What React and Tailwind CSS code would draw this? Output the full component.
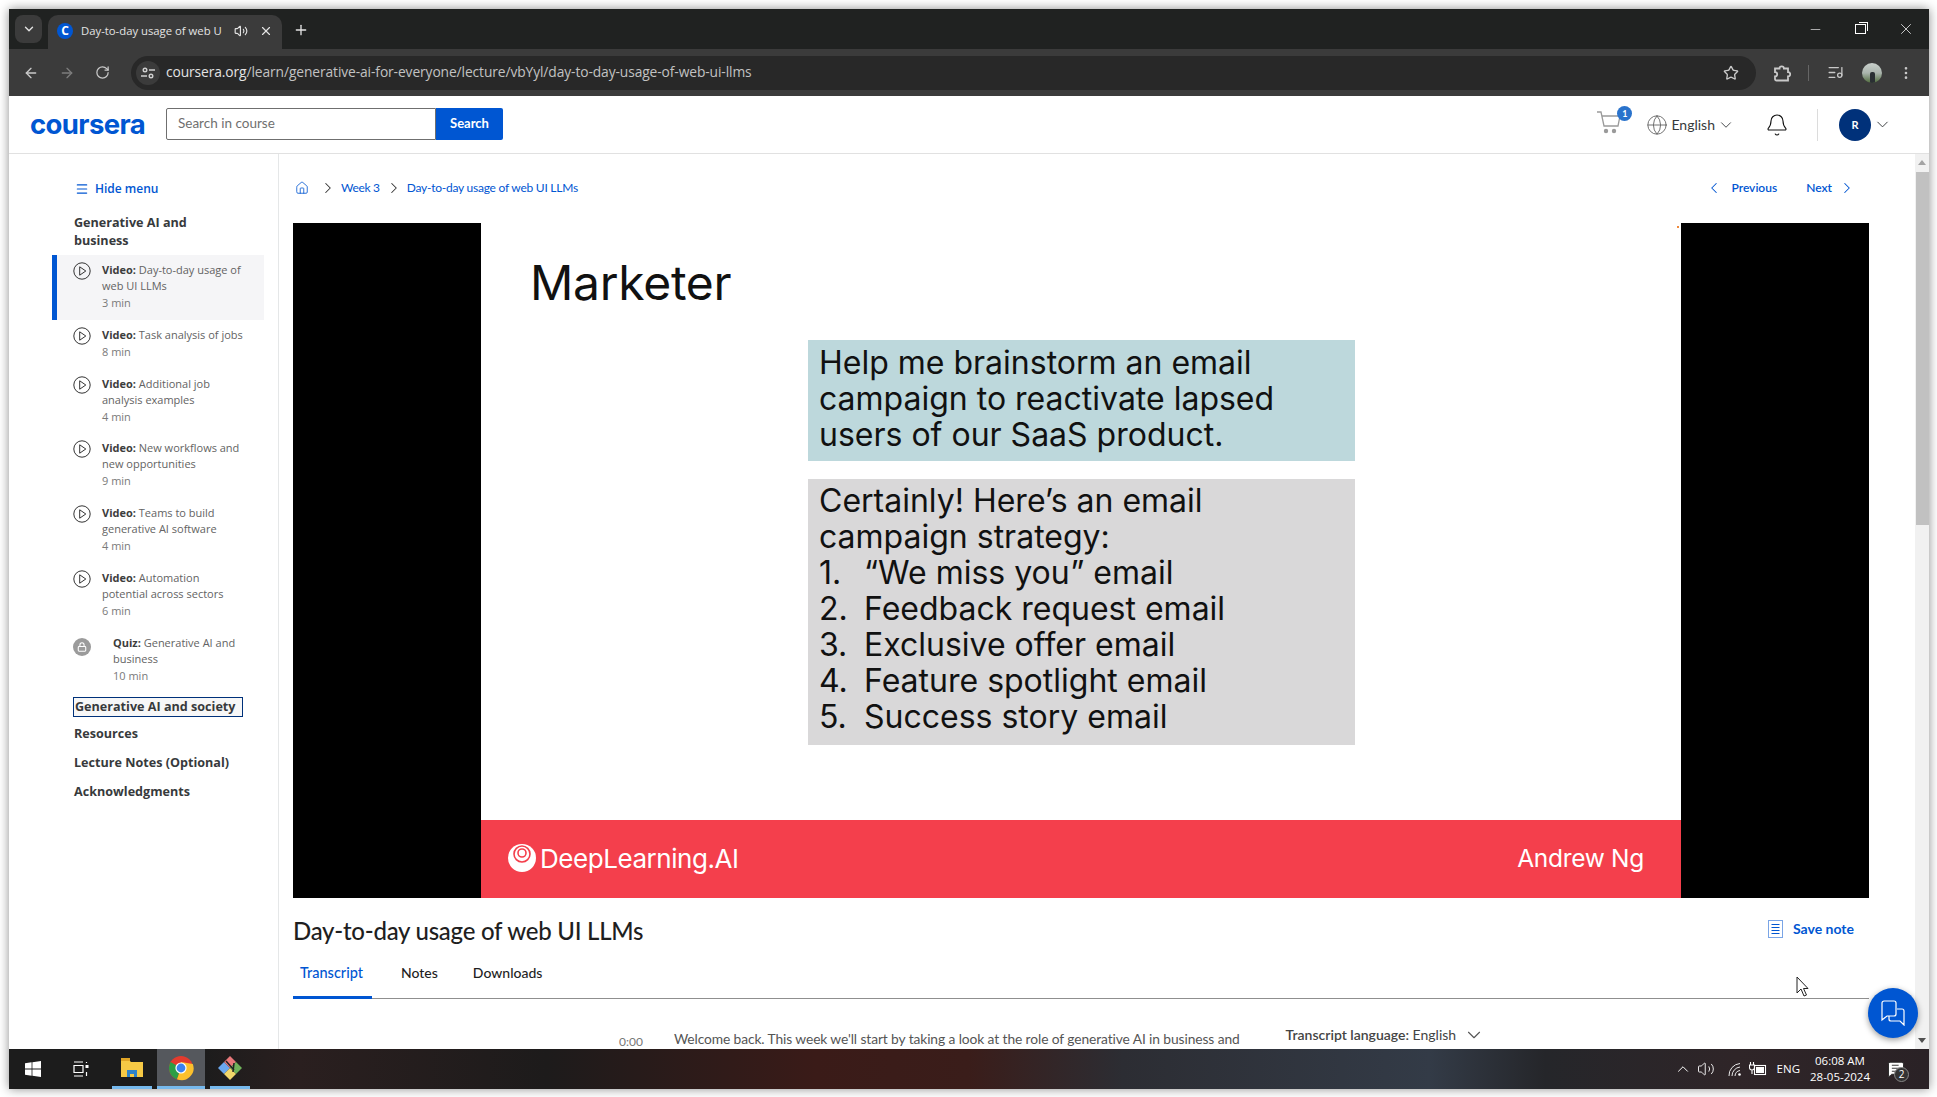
import React from 'react';
import { ChevronDown, ChevronLeft, ChevronRight, X, Plus, ArrowLeft, ArrowRight, RotateCw, Star, Volume2, Minus, Menu, Home, Bell, Globe, ChevronUp, EllipsisVertical, ListMusic, Lock, MessageSquareText } from 'lucide-react';

const lessons = [
  { kind: 'Video:', lines: ['Day-to-day usage of', 'web UI LLMs'], time: '3 min', active: true },
  { kind: 'Video:', lines: ['Task analysis of jobs'], time: '8 min' },
  { kind: 'Video:', lines: ['Additional job', 'analysis examples'], time: '4 min', tight: true },
  { kind: 'Video:', lines: ['New workflows and', 'new opportunities'], time: '9 min' },
  { kind: 'Video:', lines: ['Teams to build', 'generative AI software'], time: '4 min' },
  { kind: 'Video:', lines: ['Automation', 'potential across sectors'], time: '6 min' },
];

const steps = ['“We miss you” email', 'Feedback request email', 'Exclusive offer email', 'Feature spotlight email', 'Success story email'];

function PlayIcon() {
  return (
    <svg width="18" height="18" viewBox="0 0 18 18" fill="none" stroke="#333" strokeWidth="1" className="shrink-0">
      <circle cx="9" cy="9" r="8.2" />
      <path d="M6.7 4.8 L12.8 9 L6.7 13.2 Z" />
    </svg>
  );
}

function Lesson({ item }) {
  return (
    <div className={`flex pt-[7px] pl-[21px] ${item.tight ? 'pb-[7px]' : 'pb-[8px]'} ${item.active ? 'bg-[#f5f5f7] border-l-[5px] border-[#0056d2] !pl-[16px]' : ''}`}>
      <PlayIcon />
      <div className="ml-[11px] text-[11px] leading-[16px] text-[#636363]">
        {item.lines.map((line, i) => (
          <div key={line}>
            {i === 0 && <span className="font-bold text-[#3d3d3d]">{item.kind} </span>}
            {line}
          </div>
        ))}
        <div className="leading-[18px] text-[#7a7a7a]">{item.time}</div>
      </div>
    </div>
  );
}

function Sidebar() {
  return (
    <div className="w-[270px] shrink-0 border-r border-[#e5e7e8] font-['Open_Sans',sans-serif]">
      <div className="flex items-center pl-[66px] pt-[27px] text-[#0056d2]">
        <Menu size={14} strokeWidth={2} />
        <span className="ml-[6px] text-[12px] leading-[16px] font-semibold">Hide menu</span>
      </div>
      <div className="ml-[65px] mt-[17px] w-[140px] text-[12.6px] leading-[18px] font-bold text-[#373a3c]">Generative AI and business</div>
      <div className="ml-[43px] mt-[5px] w-[212px]">
        {lessons.map(item => <Lesson key={item.lines[0]} item={item} />)}
        <div className="flex pt-[7px] pb-[8px] pl-[21px]">
          <div className="w-[18px] h-[18px] mt-[3px] rounded-full bg-[#9b9b9b] flex items-center justify-center shrink-0">
            <Lock size={10} color="#fff" strokeWidth={2.5} />
          </div>
          <div className="ml-[22px] text-[11px] leading-[16px] text-[#636363]">
            <div><span className="font-bold text-[#3d3d3d]">Quiz: </span>Generative AI and</div>
            <div>business</div>
            <div className="leading-[18px] text-[#7a7a7a]">10 min</div>
          </div>
        </div>
      </div>
      <div className="ml-[64px] mt-[4px] text-[12.6px] font-bold text-[#373a3c]">
        <div className="w-[170px] h-[20px] border border-[#00317a] bg-[#f7f7f7] pl-[1px] leading-[18px] whitespace-nowrap">Generative AI and society</div>
        <div className="pl-[1px] mt-[8px] leading-[18px]">Resources</div>
        <div className="pl-[1px] mt-[11px] leading-[18px]">Lecture Notes (Optional)</div>
        <div className="pl-[1px] mt-[11px] leading-[18px]">Acknowledgments</div>
      </div>
    </div>
  );
}

function Slide() {
  return (
    <div className="relative w-[1200px] h-full bg-white flex flex-col font-['Inter',sans-serif] text-[#111]">
      <div className="flex-1 overflow-hidden">
        <div className="ml-[49px] mt-[28px] text-[48px] leading-[64px] tracking-[-0.3px]">Marketer</div>
        <div className="ml-[327px] mt-[25px] w-[547px] text-[32px] leading-[36px]">
          <div className="h-[121px] bg-[#bdd8dc] px-[11px] pt-[5px]">
            <div>Help me brainstorm an email</div>
            <div>campaign to reactivate lapsed</div>
            <div>users of our SaaS product.</div>
          </div>
          <div className="h-[266px] mt-[18px] bg-[#d9d8d9] px-[11px] pt-[4px]">
            <div>Certainly! Here’s an email</div>
            <div>campaign strategy:</div>
            {steps.map((step, i) => (
              <div key={step} className="flex">
                <span className="w-[45px]">{i + 1}.</span>
                <span>{step}</span>
              </div>
            ))}
          </div>
        </div>
      </div>
      <div className="h-[78px] bg-[#f43f4c] flex items-center justify-between pl-[26px] pr-[37px] pb-[2px] text-white">
        <div className="flex items-center">
          <svg width="30" height="30" viewBox="0 0 30 30">
            <circle cx="15" cy="15" r="14" fill="#fff" />
            <circle cx="15" cy="11" r="8" fill="none" stroke="#f43f4c" strokeWidth="1.6" />
            <circle cx="15" cy="10" r="4" fill="none" stroke="#f43f4c" strokeWidth="1.6" />
          </svg>
          <span className="ml-[3px] text-[26px] tracking-[-0.45px]">DeepLearning.AI</span>
        </div>
        <span className="text-[24.5px] tracking-[-0.3px]">Andrew Ng</span>
      </div>
      <div className="absolute right-[2px] top-[3px] w-[2px] h-[2px] bg-[#f08a3c]" />
    </div>
  );
}

function Main() {
  return (
    <div className="flex-1 min-w-0 h-full overflow-hidden pl-[14px] font-['Lato',sans-serif]">
      <div className="w-[1576px]">
        <div className="h-[69px] pt-[26px] flex items-start text-[12px] leading-[16px] text-[#0056d2]">
          <Home size={14} strokeWidth={1.4} className="ml-[2px] mt-[1px]" />
          <ChevronRight size={18} strokeWidth={1.4} color="#333" className="ml-[10px] mt-[-1px]" />
          <span className="ml-[4px] tracking-[-0.3px]">Week 3</span>
          <ChevronRight size={18} strokeWidth={1.4} color="#333" className="ml-[5px] mt-[-1px]" />
          <span className="ml-[4px] tracking-[-0.24px]">Day-to-day usage of web UI LLMs</span>
          <div className="ml-auto mr-[13px] flex items-start font-semibold">
            <ChevronLeft size={18} strokeWidth={1.4} className="mt-[-1px]" />
            <span className="ml-[8px]">Previous</span>
            <span className="ml-[29px]">Next</span>
            <ChevronRight size={18} strokeWidth={1.4} className="ml-[6px] mt-[-1px]" />
          </div>
        </div>
        <div className="h-[675px] bg-black flex justify-center">
          <Slide />
        </div>
        <div className="h-[65px] flex items-center justify-between">
          <div className="text-[24px] leading-[30px] font-medium text-[#1f1f1f] tracking-[-0.25px]">Day-to-day usage of web UI LLMs</div>
          <div className="flex items-center mr-[15px] mt-[-4px] text-[#0056d2] text-[14px] font-bold">
            <svg width="15" height="18" viewBox="0 0 15 18" fill="none" stroke="#0056d2">
              <rect x="0.5" y="0.5" width="14" height="17" stroke="#7aa5e6" />
              <path d="M3.5 4.5h8M3.5 7.5h8M3.5 10.5h8M3.5 13.5h8" />
            </svg>
            <span className="ml-[10px]">Save note</span>
          </div>
        </div>
        <div className="h-[36px] border-b-[1.5px] border-[#8f8f8f] flex pt-[1px] text-[14px] leading-[18px] font-medium text-[#1f1f1f]">
          <div className="w-[79px] h-[35px] pl-[7px] text-[14.5px] text-[#0056d2] border-b-[3px] border-[#0056d2]">Transcript</div>
          <div className="ml-[29px]">Notes</div>
          <div className="ml-[35px]">Downloads</div>
        </div>
        <div className="flex items-start mt-[31px] text-[13.8px] leading-[18px] text-[#555]">
          <span className="ml-[326px] mt-[3px] text-[12px] text-[#777]">0:00</span>
          <span className="ml-[31px] tracking-[-0.1px] whitespace-nowrap">Welcome back. This week we'll start by taking a look at the role of generative AI in business and</span>
          <span className="ml-[46px] mt-[-4px] whitespace-nowrap text-[14px] text-[#444]"><span className="font-semibold">Transcript language:</span> English</span>
          <ChevronDown size={22} strokeWidth={1.2} className="ml-[7px] mt-[-6px]" />
        </div>
      </div>
    </div>
  );
}

function Scrollbar() {
  return (
    <div className="w-[14px] h-full shrink-0 bg-[#f1f1f1] flex flex-col items-center justify-between pt-[6px] pb-[6px]">
      <div className="w-full flex flex-col items-center">
        <div className="w-0 h-0 border-x-[4px] border-x-transparent border-b-[5px] border-b-[#a3a3a3]" />
        <div className="w-[13px] h-[353px] mt-[7px] bg-[#c1c1c1]" />
      </div>
      <div className="w-0 h-0 border-x-[4px] border-x-transparent border-t-[5px] border-t-[#505050]" />
    </div>
  );
}

function ChromeLogo() {
  return (
    <svg width="26" height="26" viewBox="0 0 26 26">
      <circle cx="13" cy="13" r="12" fill="#e33b2e" />
      <path d="M13 13 L2.6 7 A12 12 0 0 0 9 24.3 Z" fill="#2c9e45" />
      <path d="M13 13 L9 24.3 A12 12 0 0 0 24.8 9 L13 7 Z" fill="#fbc02d" />
      <circle cx="13" cy="13" r="5.6" fill="#fff" />
      <circle cx="13" cy="13" r="4.4" fill="#3b82f0" />
    </svg>
  );
}

function Taskbar() {
  return (
    <div className="h-[40px] shrink-0 flex items-center text-white font-['Open_Sans',sans-serif] bg-[linear-gradient(90deg,#1c1c1c_0%,#1c1c1c_10%,#2a1f1f_15%,#1d1b1b_28%,#3a1b18_42%,#3a1d1a_50%,#2c2d33_58%,#333b47_74%,#25262a_80%,#2f2528_90%,#2a2226_100%)]">
      <svg width="16" height="16" viewBox="0 0 16 16" fill="#fff" className="ml-[16px]">
        <path d="M0 2.3 6.6 1.3V7.6H0ZM7.4 1.2 16 0V7.6H7.4ZM0 8.4H6.6V14.7L0 13.7ZM7.4 8.4H16V16L7.4 14.8Z" />
      </svg>
      <svg width="17" height="16" viewBox="0 0 17 16" fill="none" stroke="#fff" strokeWidth="1.2" className="ml-[32px]">
        <path d="M1 1h9M1 15h9M1 4.5h9v7H1zM13.5 1v1M13.5 11v4" />
        <rect x="12.5" y="4" width="3" height="3" fill="#fff" stroke="none" />
      </svg>
      <div className="ml-[22px] w-[40px] h-[40px] border-b-[3px] border-[#76b9ed] flex items-center justify-center">
        <svg width="22" height="20" viewBox="0 0 22 20">
          <path d="M0 2h8l2 2h12v15H0Z" fill="#f6c945" />
          <path d="M0 0h9v3H0Z" fill="#e0a526" />
          <path d="M6 12h10v7h-3v-3H9v3H6Z" fill="#2f83c9" />
        </svg>
      </div>
      <div className="ml-[5px] w-[48px] h-[40px] border-b-[3px] border-[#76b9ed] bg-[#55585d] flex items-center justify-center"><ChromeLogo /></div>
      <div className="ml-[5px] w-[40px] h-[40px] border-b-[3px] border-[#76b9ed] flex items-center justify-center">
        <svg width="24" height="24" viewBox="0 0 24 24">
          <path d="M0 12l6-6 6 6-6 6Z" fill="#6aa7ee" />
          <path d="M6 6l6-6 6 6-6 6Z" fill="#e8787a" />
          <path d="M12 12l6-6 6 6-6 6Z" fill="#6fb25a" />
          <path d="M6 18l6-6 6 6-6 6Z" fill="#f2d76b" />
          <path d="M8 5l8 9M16 7l-1 9" stroke="#222" strokeWidth="1.5" />
        </svg>
      </div>
      <div className="ml-auto flex items-center">
        <ChevronUp size={18} strokeWidth={1.3} />
        <Volume2 size={18} strokeWidth={1.2} className="ml-[5px]" />
        <svg width="14" height="15" viewBox="0 0 14 15" fill="none" stroke="#e8e8e8" strokeWidth="1" className="ml-[13px]">
          <path d="M1 14A12 12 0 0 1 12 1.5M4 14A9 9 0 0 1 12 5M7 14A6 6 0 0 1 12 8.5" />
          <circle cx="11.5" cy="12.5" r="1.3" fill="#fff" stroke="none" />
        </svg>
        <svg width="18" height="16" viewBox="0 0 18 16" fill="none" stroke="#fff" strokeWidth="1.1" className="ml-[7px]">
          <rect x="5.5" y="4.5" width="11" height="9" />
          <rect x="7" y="6" width="8" height="6" fill="#fff" stroke="none" />
          <path d="M1.5 1v3M4.5 1v3M0.5 4h5v2.5a2.5 2.5 0 0 1-5 0ZM3 9v4" />
        </svg>
        <span className="ml-[10px] text-[11.5px]">ENG</span>
        <div className="ml-[10px] w-[60px] text-center text-[11.5px] leading-[16px]">
          <div>06:08 AM</div>
          <div>28-05-2024</div>
        </div>
        <div className="relative ml-[17px] mr-[24px] w-[18px] h-[18px]">
          <MessageSquareText size={18} fill="#fff" stroke="#222" strokeWidth={1.2} />
          <div className="absolute right-[-4px] bottom-[-4px] w-[15px] h-[15px] rounded-full bg-[#333] border border-[#888] text-[10px] leading-[13px] text-center">2</div>
        </div>
      </div>
    </div>
  );
}

export default function App() {
  return (
    <div className="w-[1937px] h-[1097px] bg-white p-[9px] pb-[8px] overflow-hidden">
      <div className="relative w-[1920px] h-[1080px] flex flex-col overflow-hidden shadow-[0_0_10px_rgba(0,0,0,0.45)] bg-white">
        {/* tab strip */}
        <div className="h-[40px] shrink-0 bg-[#202221] flex items-end text-[#e3e3e3] font-['Open_Sans',sans-serif]">
          <div className="w-[27px] h-[28px] mb-[6px] ml-[6px] rounded-[8px] bg-[#3b3b3b] flex items-center justify-center"><ChevronDown size={14} strokeWidth={2.4} /></div>
          <div className="w-[234px] h-[34px] ml-[6px] rounded-t-[10px] bg-[#3b3b3b] flex items-center pl-[9px] pb-[2px]">
            <div className="w-[16px] h-[16px] rounded-full bg-[#0056d2] text-white text-[12px] leading-[16px] font-bold text-center shrink-0">C</div>
            <span className="ml-[8px] w-[151px] whitespace-nowrap text-[11.3px]">Day-to-day usage of web U</span>
            <Volume2 size={14} className="ml-[2px] shrink-0" />
            <X size={14} className="ml-[11px] shrink-0" />
          </div>
          <Plus size={16} strokeWidth={2} className="ml-[11px] mb-[11px]" />
          <div className="ml-auto flex items-center h-full text-white">
            <Minus size={15} strokeWidth={1} />
            <div className="ml-[32px] w-[11px] h-[10px] border border-white relative">
              <div className="absolute top-[-3px] right-[-3px] w-[9px] h-[9px] border-t border-r border-white" />
            </div>
            <X size={18} strokeWidth={1} className="ml-[31px] mr-[14px]" />
          </div>
        </div>
        {/* toolbar */}
        <div className="h-[47px] shrink-0 bg-[#3b3b3b] flex items-center text-[#c9c9c9] font-['Open_Sans',sans-serif]">
          <ArrowLeft size={16} strokeWidth={2} className="ml-[14px]" />
          <ArrowRight size={16} strokeWidth={2} className="ml-[20px] text-[#7d7d7d]" />
          <RotateCw size={15} strokeWidth={2} className="ml-[20px]" />
          <div className="ml-[21px] w-[1625px] h-[34px] rounded-full bg-[#282828] flex items-center pl-[5px] pr-[17px]">
            <div className="w-[24px] h-[24px] rounded-full bg-[#3b3b3b] flex items-center justify-center">
              <svg width="14" height="14" viewBox="0 0 14 14" fill="none" stroke="#d0d0d0" strokeWidth="1.4">
                <circle cx="4" cy="4" r="1.8" /><path d="M8 4h6M0 10h6" /><circle cx="10" cy="10" r="1.8" />
              </svg>
            </div>
            <span className="ml-[6px] text-[13.8px] tracking-[-0.1px] text-[#e3e3e3]">coursera.org<span className="text-[#c2c2c2]">/learn/generative-ai-for-everyone/lecture/vbYyl/day-to-day-usage-of-web-ui-llms</span></span>
            <Star size={16} strokeWidth={2} className="ml-auto" />
          </div>
          <svg width="18" height="18" viewBox="0 0 18 18" fill="none" stroke="#c9c9c9" strokeWidth="1.8" className="ml-[17px]">
            <path d="M2 4.5h4.5a2.2 2.2 0 0 1 4.4 0H15v3.6a2.2 2.2 0 0 1 0 4.4V16.5H3.5a1.5 1.5 0 0 1-1.5-1.5v-2.5a2.2 2.2 0 0 0 0-4.4Z" />
          </svg>
          <div className="ml-[17px] w-px h-[16px] bg-[#666]" />
          <ListMusic size={17} strokeWidth={1.8} className="ml-[18px]" />
          <div className="ml-[18px] w-[20px] h-[20px] rounded-full overflow-hidden bg-[linear-gradient(180deg,#c9d0cc_0%,#aab4ad_50%,#4f6b3c_100%)] flex justify-center items-end">
            <div className="w-[5px] h-[11px] rounded-t-[2px] bg-[#2a2f33]" />
          </div>
          <EllipsisVertical size={16} strokeWidth={2} className="ml-[16px]" />
        </div>
        {/* site header */}
        <div className="h-[58px] shrink-0 border-b-[1.5px] border-[#e1e1e1] flex items-center font-['Lato',sans-serif]">
          <span className="ml-[21px] mt-[-2px] w-[121px] font-['Inter',sans-serif] text-[27.5px] leading-[32px] font-bold tracking-[-0.6px] text-[#0056d2]">coursera</span>
          <div className="ml-[15px] mt-[-2px] w-[270px] h-[32px] border border-[#6f6f6f] rounded-l-[2px] pl-[11px] text-[13.5px] leading-[28px] text-[#6f6f6f]">Search in course</div>
          <div className="mt-[-2px] w-[67px] h-[32px] bg-[#0056d2] rounded-r-[2px] text-white text-[13px] font-bold leading-[30px] text-center">Search</div>
          <div className="ml-auto flex items-center text-[#373a3c]">
            <div className="relative mt-[-3px]">
              <svg width="26" height="24" viewBox="0 0 26 24" fill="none" stroke="#9a9a9a" strokeWidth="1.3">
                <path d="M1 1h4l3 14h14l2-10H6" />
                <circle cx="10" cy="20" r="2.2" fill="#9a9a9a" stroke="none" />
                <circle cx="18" cy="20" r="2.2" fill="#9a9a9a" stroke="none" />
              </svg>
              <div className="absolute right-[-10px] top-[-5px] w-[15px] h-[15px] rounded-full bg-[#2a73cc] text-white text-[9px] leading-[15px] font-bold text-center">1</div>
            </div>
            <Globe size={22} strokeWidth={1} className="ml-[24px] text-[#666]" />
            <span className="ml-[3px] text-[14px]">English</span>
            <ChevronDown size={18} strokeWidth={1.2} className="ml-[2px]" />
            <Bell size={24} strokeWidth={1.1} className="ml-[30px] text-[#111]" />
            <div className="ml-[28px] w-px h-[32px] bg-[#dcdcdc]" />
            <div className="ml-[21px] w-[32px] h-[32px] rounded-full bg-[#00317a] text-white text-[11px] leading-[32px] font-bold text-center">R</div>
            <ChevronDown size={19} strokeWidth={1.2} className="ml-[2px] mr-[37px]" />
          </div>
        </div>
        {/* page */}
        <div className="flex-1 min-h-0 flex overflow-hidden">
          <Sidebar />
          <Main />
          <Scrollbar />
        </div>
        <Taskbar />
        {/* floating stuff */}
        <div className="absolute left-[1859px] top-[979px] w-[50px] h-[50px] rounded-full bg-[#0056d2] shadow-[0_2px_6px_rgba(0,0,0,0.4)] flex items-center justify-center">
          <svg width="26" height="26" viewBox="0 0 26 26" fill="none" stroke="#fff" strokeWidth="1.2">
            <path d="M2 3a2 2 0 0 1 2-2h10a2 2 0 0 1 2 2v11a2 2 0 0 1-2 2H7l-5 4Z" />
            <path d="M17 9h5a2 2 0 0 1 2 2v14l-4-4h-9a2 2 0 0 1-2-2v-3" />
          </svg>
        </div>
        <svg width="14" height="22" viewBox="0 0 14 22" className="absolute left-[1787px] top-[967px]">
          <path d="M1 1v16l4-4 3 7 2.5-1-3-6.5H12Z" fill="#fff" stroke="#222" strokeWidth="1" />
        </svg>
      </div>
    </div>
  );
}
